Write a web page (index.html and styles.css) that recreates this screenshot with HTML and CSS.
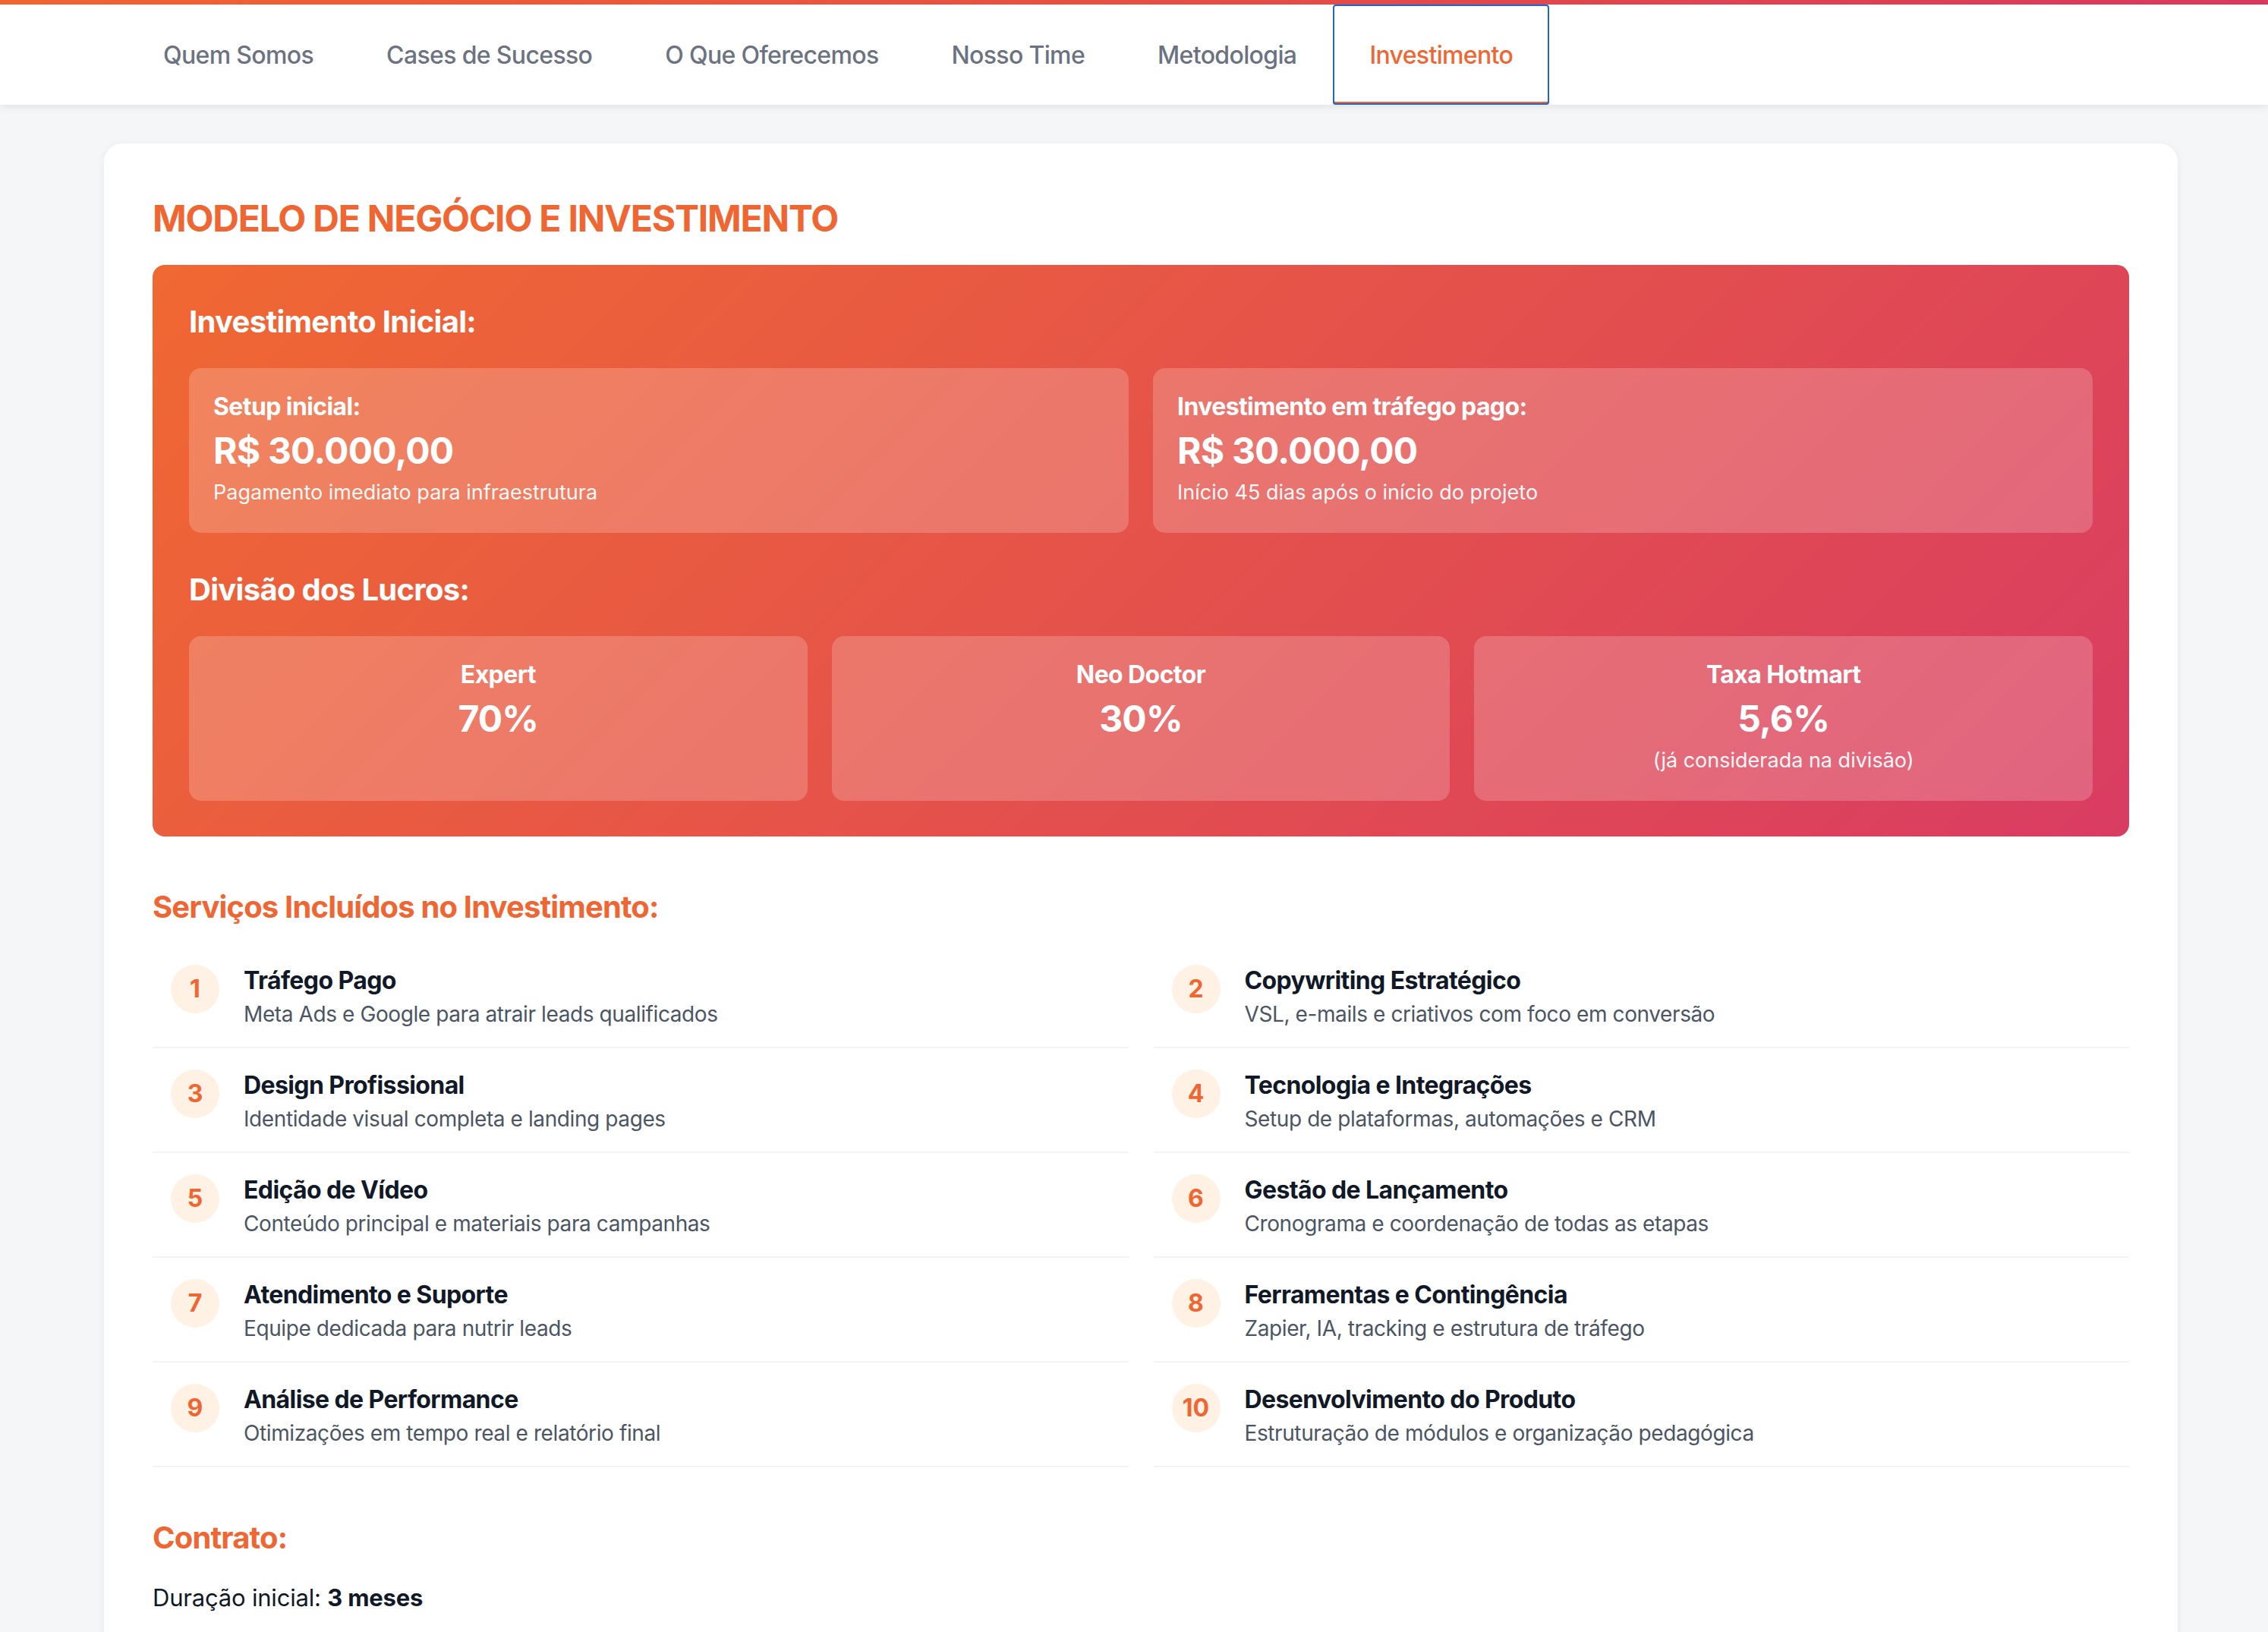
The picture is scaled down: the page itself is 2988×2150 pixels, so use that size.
FILE: index.html
```html
<!DOCTYPE html>
<html lang="pt-BR">
<head>
<meta charset="utf-8">
<title>Modelo de Negócio e Investimento</title>
<link rel="stylesheet" href="styles.css">
</head>
<body>
<div class="topbar"></div>
<nav class="nav">
  <ul class="nav-list">
    <li><a class="nav-link">Quem Somos</a></li>
    <li><a class="nav-link">Cases de Sucesso</a></li>
    <li><a class="nav-link">O Que Oferecemos</a></li>
    <li><a class="nav-link">Nosso Time</a></li>
    <li><a class="nav-link">Metodologia</a></li>
    <li><a class="nav-link active">Investimento</a></li>
  </ul>
</nav>
<main class="main">
  <section class="card">
    <h2 class="page-title">MODELO DE NEGÓCIO E INVESTIMENTO</h2>

    <div class="invest-box">
      <h3 class="box-heading">Investimento Inicial:</h3>
      <div class="grid-2">
        <div class="tile">
          <div class="tile-label">Setup inicial:</div>
          <div class="tile-value">R$ 30.000,00</div>
          <div class="tile-note">Pagamento imediato para infraestrutura</div>
        </div>
        <div class="tile">
          <div class="tile-label">Investimento em tráfego pago:</div>
          <div class="tile-value">R$ 30.000,00</div>
          <div class="tile-note">Início 45 dias após o início do projeto</div>
        </div>
      </div>

      <h3 class="box-heading">Divisão dos Lucros:</h3>
      <div class="grid-3">
        <div class="tile tile-center">
          <div class="tile-label">Expert</div>
          <div class="tile-value">70%</div>
        </div>
        <div class="tile tile-center">
          <div class="tile-label">Neo Doctor</div>
          <div class="tile-value">30%</div>
        </div>
        <div class="tile tile-center">
          <div class="tile-label">Taxa Hotmart</div>
          <div class="tile-value">5,6%</div>
          <div class="tile-note">(já considerada na divisão)</div>
        </div>
      </div>
    </div>

    <h3 class="section-title">Serviços Incluídos no Investimento:</h3>
    <div class="services">
      <div class="service"><span class="num">1</span><div class="service-body"><div class="service-title">Tráfego Pago</div><div class="service-desc">Meta Ads e Google para atrair leads qualificados</div></div></div>
      <div class="service"><span class="num">2</span><div class="service-body"><div class="service-title">Copywriting Estratégico</div><div class="service-desc">VSL, e-mails e criativos com foco em conversão</div></div></div>
      <div class="service"><span class="num">3</span><div class="service-body"><div class="service-title">Design Profissional</div><div class="service-desc">Identidade visual completa e landing pages</div></div></div>
      <div class="service"><span class="num">4</span><div class="service-body"><div class="service-title">Tecnologia e Integrações</div><div class="service-desc">Setup de plataformas, automações e CRM</div></div></div>
      <div class="service"><span class="num">5</span><div class="service-body"><div class="service-title">Edição de Vídeo</div><div class="service-desc">Conteúdo principal e materiais para campanhas</div></div></div>
      <div class="service"><span class="num">6</span><div class="service-body"><div class="service-title">Gestão de Lançamento</div><div class="service-desc">Cronograma e coordenação de todas as etapas</div></div></div>
      <div class="service"><span class="num">7</span><div class="service-body"><div class="service-title">Atendimento e Suporte</div><div class="service-desc">Equipe dedicada para nutrir leads</div></div></div>
      <div class="service"><span class="num">8</span><div class="service-body"><div class="service-title">Ferramentas e Contingência</div><div class="service-desc">Zapier, IA, tracking e estrutura de tráfego</div></div></div>
      <div class="service"><span class="num">9</span><div class="service-body"><div class="service-title">Análise de Performance</div><div class="service-desc">Otimizações em tempo real e relatório final</div></div></div>
      <div class="service"><span class="num">10</span><div class="service-body"><div class="service-title">Desenvolvimento do Produto</div><div class="service-desc">Estruturação de módulos e organização pedagógica</div></div></div>
    </div>

    <h3 class="section-title contract-title">Contrato:</h3>
    <p class="contract">Duração inicial: <strong>3 meses</strong></p>
  </section>
</main>
</body>
</html>
```

FILE: styles.css
```css
* {
  box-sizing: border-box;
}

html, body {
  margin: 0;
  padding: 0;
}

body {
  background: #f5f6f8;
  font-family: "Inter", "Noto Sans", "Liberation Sans", sans-serif;
  color: #111827;
  overflow: hidden;
}

.topbar {
  height: 6px;
  background: linear-gradient(90deg, #f06632 0%, #e44f48 55%, #d83a60 100%);
}

.nav {
  background: #ffffff;
  height: 132px;
  box-shadow: 0 3px 10px rgba(0, 0, 0, 0.08);
  position: relative;
  z-index: 2;
}

.nav-list {
  list-style: none;
  margin: 0;
  padding: 0 0 0 167px;
  display: flex;
  height: 100%;
}

.nav-list li {
  display: flex;
}

.nav-link {
  display: flex;
  align-items: center;
  height: 100%;
  padding: 0 48px;
  font-size: 32px;
  font-weight: 500;
  color: #6b7280;
  letter-spacing: -0.65px;
  cursor: pointer;
}

.nav-link.active {
  color: #f06632;
  box-shadow: inset 0 -4px 0 #f06632;
  outline: 2px solid #1f66d1;
  outline-offset: -2px;
  border-radius: 4px;
}

.main {
  padding: 51px 119px 0 137px;
}

.card {
  background: #ffffff;
  border-radius: 24px;
  box-shadow: 0 2px 12px rgba(0, 0, 0, 0.06);
  padding: 70px 64px 80px;
}

.page-title {
  margin: 0 0 32px;
  font-size: 48px;
  line-height: 1.2;
  font-weight: 700;
  color: #f06632;
  letter-spacing: -1.2px;
}

.invest-box {
  background: linear-gradient(135deg, #f06832 0%, #d93c62 100%);
  border-radius: 16px;
  padding: 48px 48px 47px;
  color: #ffffff;
}

.box-heading {
  margin: 0 0 34px;
  font-size: 40px;
  line-height: 54px;
  font-weight: 700;
  letter-spacing: -0.7px;
}

.grid-2 {
  display: grid;
  grid-template-columns: 1fr 1fr;
  gap: 32px;
  margin-bottom: 48px;
}

.grid-3 {
  display: grid;
  grid-template-columns: 1fr 1fr 1fr;
  gap: 32px;
}

.tile {
  background: rgba(255, 255, 255, 0.2);
  border-radius: 16px;
  padding: 32px 32px 34px;
}

.tile-center {
  text-align: center;
}

.tile-label {
  font-size: 32px;
  line-height: 1.2;
  font-weight: 700;
  letter-spacing: -0.6px;
}

.tile-value {
  margin-top: 10px;
  font-size: 48px;
  line-height: 1.2;
  font-weight: 700;
  letter-spacing: -0.8px;
}

.tile-note {
  margin-top: 6px;
  font-size: 27px;
  line-height: 1.45;
  opacity: 0.95;
}

.section-title {
  margin: 69px 0 24px;
  font-size: 40px;
  line-height: 1.2;
  font-weight: 700;
  color: #f06632;
  letter-spacing: -0.85px;
}

.services {
  display: grid;
  grid-template-columns: 1fr 1fr;
  column-gap: 33px;
}

.service {
  display: flex;
  align-items: flex-start;
  gap: 32px;
  padding: 28px 24px 22px;
  border-bottom: 2px solid #f3f4f6;
}

.num {
  flex: none;
  width: 64px;
  height: 64px;
  border-radius: 50%;
  background: #fff1e3;
  color: #f06632;
  font-size: 32px;
  font-weight: 700;
  display: flex;
  align-items: center;
  justify-content: center;
}

.service-title {
  font-size: 32px;
  line-height: 42px;
  font-weight: 700;
  color: #111827;
  letter-spacing: -0.6px;
}

.service-desc {
  margin-top: 2px;
  font-size: 28px;
  line-height: 42px;
  color: #4b5563;
  letter-spacing: -0.4px;
}

.contract-title {
  margin-bottom: 32px;
}

.contract {
  margin: 0;
  font-size: 31px;
  line-height: 1.5;
  color: #111827;
  letter-spacing: -0.2px;
}

.contract strong {
  font-weight: 700;
}
```
